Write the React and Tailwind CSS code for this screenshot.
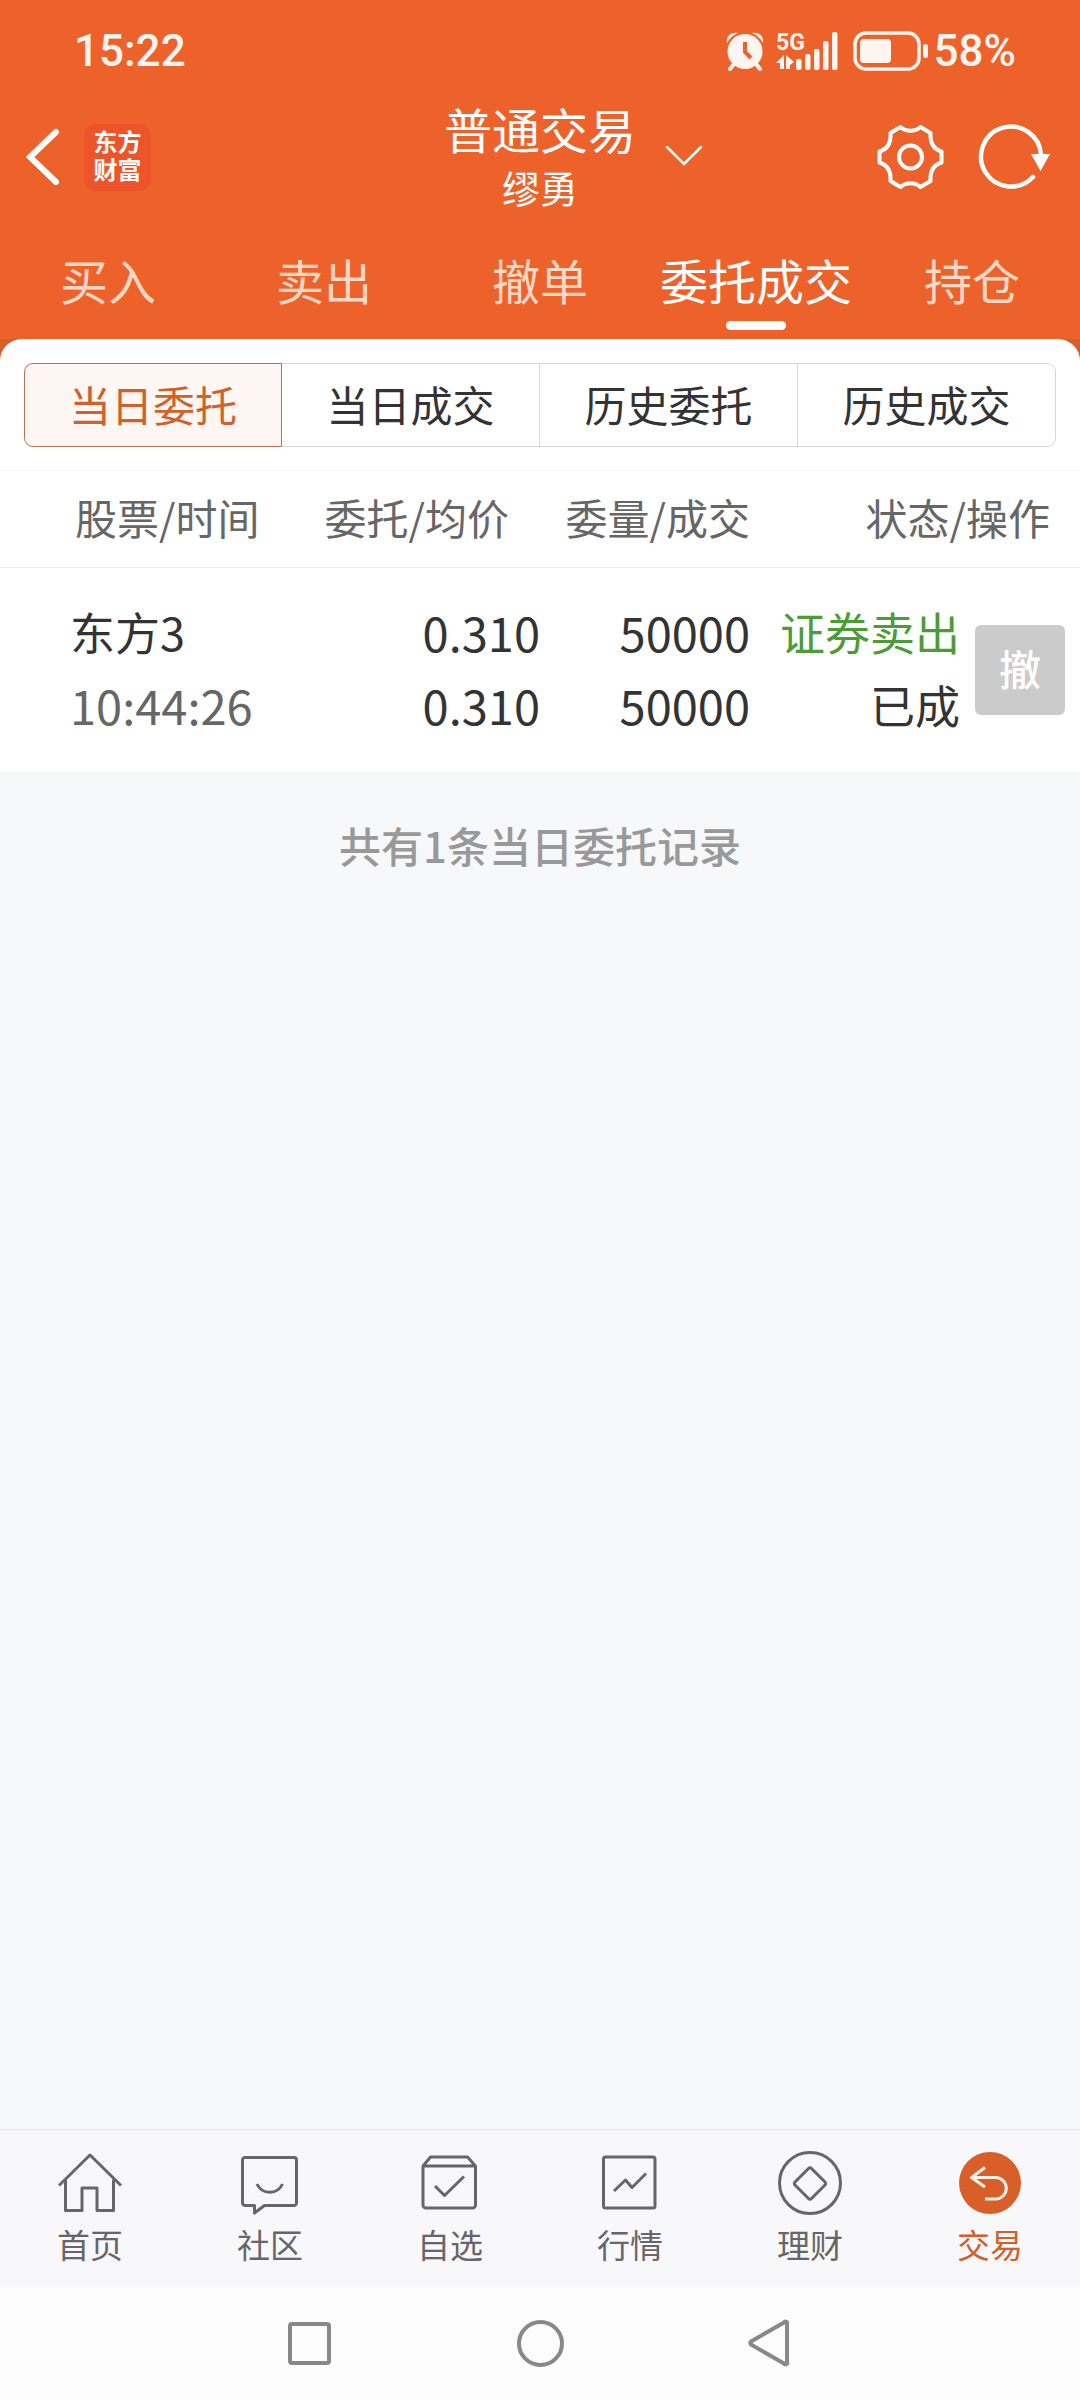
// App.jsx
import React, { useState } from 'react';

const mainTabs = ['买入', '卖出', '撤单', '委托成交', '持仓'];
const subTabs = ['当日委托', '当日成交', '历史委托', '历史成交'];

const orders = [
  {
    name: '东方3',
    time: '10:44:26',
    price: '0.310',
    avgPrice: '0.310',
    amount: '50000',
    dealt: '50000',
    side: '证券卖出',
    status: '已成'
  }
];

const AlarmIcon = () => (
  <svg className="w-[38px] h-[40px]" viewBox="0 0 38 40" fill="none">
    <path d="M8 33 4 38M30 33l4 5" stroke="#fff5f0" strokeWidth="4" strokeLinecap="round" />
    <path d="M1 12C0 5 5 1 12 2 7 4 4 7 1 12zM37 12C38 5 33 1 26 2c5 2 8 5 11 10z" fill="#fff5f0" />
    <circle cx="19" cy="20.500" r="17.500" fill="#fff5f0" />
    <path d="M19 11v10l6 6" stroke="#ed622b" strokeWidth="4" />
  </svg>
);

const SignalIcon = () => (
  <svg className="w-[64px] h-[48px]" viewBox="0 -4 64 48" fill="#fff5f0">
    <text x="0" y="19" fontSize="23" fontWeight="700" fontFamily="Roboto, sans-serif">5G</text>
    <path d="M8 24v14H4v-6H0zM10 24v14h4v-4l4-3z" />
    <rect x="20" y="28" width="5.500" height="11" rx="2" />
    <rect x="29" y="23" width="5.500" height="16" rx="2" />
    <rect x="38" y="18" width="5.500" height="21" rx="2" />
    <rect x="47" y="10" width="5.500" height="29" rx="2" />
    <rect x="56" y="1" width="5.500" height="38" rx="2" />
  </svg>
);

const BatteryIcon = () => (
  <svg className="w-[78px] h-[40px]" viewBox="0 0 78 40" fill="none">
    <rect x="3" y="2" width="64" height="36" rx="11" stroke="#fff5f0" strokeWidth="3.500" />
    <rect x="8" y="8" width="31" height="24" rx="4" fill="#fff5f0" />
    <rect x="71" y="13" width="5" height="14" rx="2.500" fill="#fff5f0" />
  </svg>
);

const BackIcon = () => (
  <svg className="w-[34px] h-[58px]" viewBox="0 0 34 58" fill="none">
    <path d="M30 4 4 29l26 25" stroke="#fff" strokeWidth="6" strokeLinecap="round" />
  </svg>
);

const ChevronIcon = () => (
  <svg className="w-[38px] h-[22px]" viewBox="0 0 38 22" fill="none">
    <path d="m2 1 17 17L36 1" stroke="#fff" strokeWidth="2.500" strokeLinecap="round" />
  </svg>
);

const GearIcon = () => (
  <svg className="w-[68px] h-[66px]" viewBox="0 0 68 66" fill="none" stroke="#fff" strokeWidth="4" strokeLinejoin="round">
    <path d="M23.500 3C29 8 38 8 43.500 3L53.500 9C53 18 56 25 64.500 27.500V38.500C56 41 53 48 53.500 57L43.500 63C38 58 29 58 23.500 63L13.500 57C14 48 11 41 2.500 38.500V27.500C11 25 14 18 13.500 9Z" />
    <circle cx="33.500" cy="33" r="11.500" />
  </svg>
);

const RefreshIcon = () => (
  <svg className="w-[72px] h-[68px]" viewBox="0 0 72 68" fill="none">
    <path d="M63 32A30 30 0 1 0 55 54" stroke="#fff" strokeWidth="4.500" strokeLinecap="round" />
    <path d="M53 31h19l-9.500 17z" fill="#fff" />
  </svg>
);

const navItems = [
  {
    label: '首页',
    icon: (
      <>
        <path d="M1 34.500 32 4l31 30.500" />
        <path d="M7.500 28.500v31H24V37h15v22.500h16.500v-31" />
      </>
    )
  },
  {
    label: '社区',
    icon: (
      <>
        <path d="M7 6.500h49a2.500 2.500 0 0 1 2.500 2.500v43a2.500 2.500 0 0 1-2.500 2.500H26.500L16.500 62v-7.500H7A2.500 2.500 0 0 1 4.500 52V9A2.500 2.500 0 0 1 7 6.500z" />
        <path d="M19 33c5 11 20.500 11 25.500 0" />
      </>
    )
  },
  {
    label: '自选',
    icon: (
      <>
        <path d="M5 15 12.500 6h37L57.500 15M5 15h52.500V54a3 3 0 0 1-3 3H8a3 3 0 0 1-3-3z" />
        <path d="m17 35 9.500 9.500L46 25.500" />
      </>
    )
  },
  {
    label: '行情',
    icon: (
      <>
        <rect x="5.500" y="6" width="51.500" height="51" rx="2" />
        <path d="m16 40 11.500-11 6.500 7.500 14-14" />
      </>
    )
  },
  {
    label: '理财',
    icon: (
      <>
        <circle cx="32" cy="32" r="30.500" />
        <path d="M30.500 17.500a2 2 0 0 1 3 0l13.500 13.500a2 2 0 0 1 0 3L33.500 47.500a2 2 0 0 1-3 0L17 34a2 2 0 0 1 0-3z" />
      </>
    )
  },
  {
    label: '交易',
    active: true,
    icon: (
      <>
        <circle cx="32" cy="32" r="31" fill="#d85f2a" stroke="none" />
        <path d="M27 16.500 13.500 26.500 27 36M13.500 26.500h25a10.800 10.800 0 0 1 0 21.500H27" stroke="#fff3e8" />
      </>
    )
  }
];

export default function App() {
  const [tab, setTab] = useState('委托成交');
  const [subTab, setSubTab] = useState('当日委托');

  return (
    <div lang="zh-CN" className="flex flex-col min-h-screen bg-[#f7f8fa] font-['Noto_Sans_CJK_SC',sans-serif] text-[#333333]">
      <header className="bg-[#ed622b] text-white">
        {/* Status bar */}
        <div className="flex items-center justify-between h-[96px] pt-[6px] pl-[74px] pr-[64px] font-[Roboto,sans-serif] text-[44px] font-medium text-[#fff5f0]">
          <span>15:22</span>
          <div className="flex items-center">
            <AlarmIcon />
            <span className="ml-3"><SignalIcon /></span>
            <span className="ml-3"><BatteryIcon /></span>
            <span className="ml-1">58%</span>
          </div>
        </div>

        {/* Title */}
        <div className="grid grid-cols-[1fr_auto_1fr] items-center h-[122px]">
          <div className="flex items-center gap-6 pl-[26px]">
            <button type="button" aria-label="返回"><BackIcon /></button>
            <div className="flex items-center justify-center w-[67px] h-[67px] pb-1 rounded-xl bg-[#ee5429]">
              <p className="w-[48px] text-[24px] leading-[28px] font-bold">东方财富</p>
            </div>
          </div>
          <div className="text-center">
            <h1 className="text-[48px] leading-[60px]">普通交易</h1>
            <p className="text-[38px] leading-[58px]">缪勇</p>
          </div>
          <div className="flex items-center justify-between pl-[29px] pr-[30px]">
            <button type="button" aria-label="切换账户"><ChevronIcon /></button>
            <div className="flex items-center gap-[33px]">
              <button type="button" aria-label="设置"><GearIcon /></button>
              <button type="button" aria-label="刷新"><RefreshIcon /></button>
            </div>
          </div>
        </div>

        {/* Tabs */}
        <nav className="grid grid-cols-5 h-[121px] text-[48px]">
          {mainTabs.map((item) => (
            <button
              key={item}
              type="button"
              onClick={() => setTab(item)}
              className={`relative ${tab === item ? 'text-white' : 'text-[#fdd8c4]'}`}
            >
              {item}
              {tab === item && (
                <span className="absolute bottom-[9px] left-1/2 -translate-x-1/2 w-[60px] h-[9px] rounded-full bg-white" />
              )}
            </button>
          ))}
        </nav>
      </header>

      <main className="flex-1">
        <div className="bg-[#d6602c]">
          <div className="px-6 pt-6 pb-[23px] rounded-t-[22px] bg-white">
            <div className="grid grid-cols-4 h-[84px] text-[42px]">
              {subTabs.map((item) => (
                <button
                  key={item}
                  type="button"
                  onClick={() => setSubTab(item)}
                  className={`border pb-1 first:rounded-l-[9px] last:rounded-r-[9px] not-first:border-l-0 ${
                    subTab === item
                      ? 'border-[#b5744f] bg-[#fdf6f2] text-[#cf612c]'
                      : 'border-[#d6d6d6] bg-white'
                  }`}
                >
                  {item}
                </button>
              ))}
            </div>
          </div>
        </div>

        <table className="w-full table-fixed border-t border-[#f7f7f7] bg-white">
          <colgroup>
            <col />
            <col className="w-[241px]" />
            <col className="w-[210px]" />
            <col className="w-[210px]" />
            <col className="w-[120px]" />
          </colgroup>
          <thead>
            <tr className="h-[97px] border-b border-[#ececec] text-[42px] text-[#666666] whitespace-nowrap">
              <th className="pl-[75px] pb-[6px] text-left font-normal">股票/时间</th>
              <th className="pr-[31px] pb-[6px] text-right font-normal">委托/均价</th>
              <th className="pb-[6px] text-right font-normal">委量/成交</th>
              <th colSpan={2} className="pr-[30px] pb-[6px] text-right font-normal">状态/操作</th>
            </tr>
          </thead>
          <tbody>
            {orders.map((order) => (
              <tr key={order.time} className="h-[204px] text-[45px] leading-[73px] text-right whitespace-nowrap">
                <td className="pl-[70px] pb-1 text-left">
                  <div>{order.name}</div>
                  <div className="text-[47px] text-[#666666]">{order.time}</div>
                </td>
                <td className="pb-1 text-[47px]">
                  <div>{order.price}</div>
                  <div>{order.avgPrice}</div>
                </td>
                <td className="pb-1 text-[47px]">
                  <div>{order.amount}</div>
                  <div>{order.dealt}</div>
                </td>
                <td className="pb-1">
                  <div className="text-[#4c9c36]">{order.side}</div>
                  <div>{order.status}</div>
                </td>
                <td className="pr-[15px]">
                  <button type="button" className="w-[90px] h-[90px] pb-1 rounded-md bg-[#cbcbcb] text-[42px] leading-none font-medium text-white align-middle">
                    撤
                  </button>
                </td>
              </tr>
            ))}
          </tbody>
        </table>

        <p className="pt-[41px] text-center text-[42px] leading-[64px] text-[#999999] font-medium">
          共有{orders.length}条当日委托记录
        </p>
      </main>

      {/* Bottom navigation */}
      <nav className="grid grid-cols-6 h-[157px] pt-[21px] border-t border-[#e3e4e6] bg-[#f8f8fa]">
        {navItems.map((item) => (
          <a
            key={item.label}
            href="#"
            className={`flex flex-col items-center text-[33px] leading-[58px] ${item.active ? 'text-[#cf612c]' : 'text-[#666666]'}`}
          >
            <svg className="w-[64px] h-[64px]" viewBox="0 0 64 64" fill="none" stroke="currentColor" strokeWidth="3" strokeLinejoin="round">
              {item.icon}
            </svg>
            {item.label}
          </a>
        ))}
      </nav>

      {/* System keys */}
      <div className="grid grid-cols-3 items-center justify-items-center h-[114px] px-[18%] bg-[#fcfcfc]">
        <button type="button" aria-label="最近任务" className="w-[43px] h-[43px] rounded-[4px] border-4 border-[#888888]" />
        <button type="button" aria-label="主屏幕" className="w-[47px] h-[47px] rounded-full border-4 border-[#888888]" />
        <button type="button" aria-label="返回上一页">
          <svg className="w-[44px] h-[48px]" viewBox="0 0 44 48" fill="none">
            <path d="M3 22.500a2 2 0 0 0 0 3L36 44.500a1.500 1.500 0 0 0 3-1.500V5a1.500 1.500 0 0 0-3-1.500z" stroke="#888888" strokeWidth="4" strokeLinejoin="round" />
          </svg>
        </button>
      </div>
    </div>
  );
}
